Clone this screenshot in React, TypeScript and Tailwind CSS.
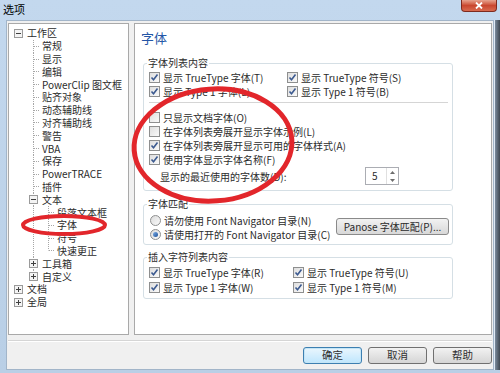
import React from 'react';

type Kind = 'none' | 'pipe' | 'tee' | 'ell' | 'minus' | 'plus' | 'minusV' | 'plusV' | 'plusL';

const treeRows: { label: string; cells: Kind[] }[] = [
  { label: '工作区', cells: ['minus'] },
  { label: '常规', cells: ['none', 'tee'] },
  { label: '显示', cells: ['none', 'tee'] },
  { label: '编辑', cells: ['none', 'tee'] },
  { label: 'PowerClip 图文框', cells: ['none', 'tee'] },
  { label: '贴齐对象', cells: ['none', 'tee'] },
  { label: '动态辅助线', cells: ['none', 'tee'] },
  { label: '对齐辅助线', cells: ['none', 'tee'] },
  { label: '警告', cells: ['none', 'tee'] },
  { label: 'VBA', cells: ['none', 'tee'] },
  { label: '保存', cells: ['none', 'tee'] },
  { label: 'PowerTRACE', cells: ['none', 'tee'] },
  { label: '插件', cells: ['none', 'tee'] },
  { label: '文本', cells: ['none', 'minusV'] },
  { label: '段落文本框', cells: ['none', 'pipe', 'tee'] },
  { label: '字体', cells: ['none', 'pipe', 'tee'] },
  { label: '符号', cells: ['none', 'pipe', 'tee'] },
  { label: '快速更正', cells: ['none', 'pipe', 'ell'] },
  { label: '工具箱', cells: ['none', 'plusV'] },
  { label: '自定义', cells: ['none', 'plusL'] },
  { label: '文档', cells: ['plus'] },
  { label: '全局', cells: ['plus'] },
];

const TreeCell = ({ kind }: { kind: Kind }) => {
  const full = kind === 'pipe' || kind === 'tee' || kind === 'minusV' || kind === 'plusV';
  const half = kind === 'ell' || kind === 'plusL';
  const horiz = kind === 'tee' || kind === 'ell';
  const box = kind.startsWith('minus') || kind.startsWith('plus');
  const plus = kind.startsWith('plus');
  return (
    <svg width="15" height="13" viewBox="0 0 15 13" className="shrink-0 overflow-visible">
      {full && <line x1="7.5" y1="0" x2="7.5" y2="13" stroke="#a6a6a6" strokeDasharray="1 1" />}
      {half && <line x1="7.5" y1="0" x2="7.5" y2="6.5" stroke="#a6a6a6" strokeDasharray="1 1" />}
      {horiz && <line x1="8" y1="6.5" x2="14" y2="6.5" stroke="#a6a6a6" strokeDasharray="1 1" />}
      {box && (
        <>
          <rect x="3.5" y="2.5" width="8" height="8" fill="#f4f4f4" stroke="#9a9a9a" />
          <line x1="5" y1="6.5" x2="10" y2="6.5" stroke="#404040" />
          {plus && <line x1="7.5" y1="4" x2="7.5" y2="9" stroke="#404040" />}
        </>
      )}
    </svg>
  );
};

const Check = ({ checked }: { checked?: boolean }) => (
  <span className="w-[11px] h-[11px] shrink-0 border border-[#8e8f8f] bg-gradient-to-br from-[#dedede] to-[#fafafa] flex items-center justify-center">
    {checked && (
      <svg width="9" height="9" viewBox="0 0 9 9">
        <path d="M1.5 4.5 L3.5 6.8 L7.5 1.5" fill="none" stroke="#3c5a90" strokeWidth="1.6" />
      </svg>
    )}
  </span>
);

const Radio = ({ checked }: { checked?: boolean }) => (
  <span className="w-[11px] h-[11px] shrink-0 rounded-full border border-[#8e8f8f] bg-gradient-to-br from-[#dcdcdc] to-[#fafafa] flex items-center justify-center">
    {checked && <span className="w-[5px] h-[5px] rounded-full bg-gradient-to-br from-[#7fb0e8] to-[#1d4f96]" />}
  </span>
);

const CheckRow = ({ label, checked }: { label: string; checked?: boolean }) => (
  <div className="flex items-center h-[14px] gap-[3px] whitespace-nowrap">
    <Check checked={checked} />
    <span>{label}</span>
  </div>
);

const Button = ({ label, primary }: { label: string; primary?: boolean }) => (
  <div
    className={
      primary
        ? 'w-[59px] h-[17px] rounded-[3px] border border-[#3c7fb1] bg-gradient-to-b from-[#eaf6fd] to-[#bee6fd] shadow-[inset_0_0_0_1px_#c4e5f6] flex items-center justify-center'
        : 'w-[59px] h-[17px] rounded-[3px] border border-[#707070] bg-gradient-to-b from-[#f2f2f2] to-[#d5d5d5] flex items-center justify-center'
    }
  >
    <span className="text-[10.5px] leading-none text-[#303030]">{label}</span>
  </div>
);

export default function App() {
  return (
    <div className="relative w-[500px] h-[373px] overflow-hidden flex flex-col bg-gradient-to-b from-[#c3d8ee] to-[#b9cfe6] font-['Noto_Sans_CJK_SC',sans-serif] text-[10px] text-[#2b2b2b]">
      {/* title bar */}
      <div className="h-[20px] flex items-start justify-between">
        <span className="pl-[3px] pt-[2px] text-[11px] leading-[14px] text-black">选项</span>
        <div className="mr-[3px] w-[36px] h-[12px] rounded-b-[4px] border border-t-0 border-[#7e2a1e] bg-gradient-to-b from-[#e6a38f] via-[#c9472f] to-[#d86a4f] flex items-center justify-center">
          <svg width="8" height="7" viewBox="0 0 8 7">
            <path d="M1 0.5 L7 6.5 M7 0.5 L1 6.5" stroke="#fff" strokeWidth="1.8" />
          </svg>
        </div>
      </div>

      <div className="flex-1 flex pb-[3px]">
        <div className="w-[6px]" />
        {/* client */}
        <div className="w-[488px] border border-[#a2b5c9] bg-[#f0f0f0] flex flex-col pt-[2px] pl-[1px] pr-[1px]">
          <div className="flex gap-[5px]">
            {/* tree */}
            <div className="w-[121px] h-[312px] border border-[#a9a9a9] bg-white pt-[3px] pl-[2px] text-[10px]">
              {treeRows.map((r, i) => (
                <div key={i} className="flex items-center h-[12.8px] whitespace-nowrap">
                  {r.cells.map((c, j) => (
                    <TreeCell key={j} kind={c} />
                  ))}
                  <span className="ml-[1px] leading-none">{r.label}</span>
                </div>
              ))}
            </div>

            {/* right panel */}
            <div className="w-[358px] h-[312px] border border-[#a9a9a9] bg-white pt-[4px]">
              <div className="pl-[6px] h-[20px] text-[13px] leading-[20px] text-[#2456a6]">字体</div>

              <fieldset className="ml-[8px] mt-[8px] w-[310px] border border-[#d5dfe5] rounded-[3px] px-[5px] pb-[5px]">
                <legend className="ml-[-2px] px-[1px] leading-[14px]">字体列表内容</legend>
                <div className="grid grid-cols-[138px_1fr]">
                  <CheckRow label="显示 TrueType 字体(T)" checked />
                  <CheckRow label="显示 TrueType 符号(S)" checked />
                  <CheckRow label="显示 Type 1 字体(L)" checked />
                  <CheckRow label="显示 Type 1 符号(B)" checked />
                </div>
                <div className="mt-[4px] mr-[-1px] border-t border-[#d5d5d5]" />
                <div className="mt-[7px]">
                  <CheckRow label="只显示文档字体(O)" />
                  <CheckRow label="在字体列表旁展开显示字体示例(L)" />
                  <CheckRow label="在字体列表旁展开显示可用的字体样式(A)" checked />
                  <CheckRow label="使用字体显示字体名称(F)" checked />
                </div>
                <div className="flex items-center h-[18px] mt-[1px]">
                  <span className="pl-[11px] w-[216px] whitespace-nowrap">显示的最近使用的字体数(D):</span>
                  <div className="w-[34px] h-[18px] border border-[#abadb3] bg-white flex">
                    <span className="flex-1 pl-[6px] leading-[16px]">5</span>
                    <div className="w-[12px] flex flex-col border-l border-[#e0e0e0]">
                      <div className="flex-1 flex items-center justify-center">
                        <svg width="5" height="3" viewBox="0 0 5 3"><path d="M0 3 L2.5 0 L5 3Z" fill="#6d6d6d" /></svg>
                      </div>
                      <div className="flex-1 flex items-center justify-center">
                        <svg width="5" height="3" viewBox="0 0 5 3"><path d="M0 0 L2.5 3 L5 0Z" fill="#6d6d6d" /></svg>
                      </div>
                    </div>
                  </div>
                </div>
              </fieldset>

              <fieldset className="ml-[8px] mt-[6px] w-[310px] border border-[#d5dfe5] rounded-[3px] pl-[6px] pr-[3px] pb-[3px]">
                <legend className="ml-[-3px] px-[1px] leading-[14px]">字体匹配</legend>
                <div className="flex items-center justify-between">
                  <div className="pt-[2px]">
                    <div className="flex items-center h-[14px] gap-[3px] whitespace-nowrap">
                      <Radio />
                      <span>请勿使用 Font Navigator 目录(N)</span>
                    </div>
                    <div className="flex items-center h-[14px] gap-[3px] whitespace-nowrap">
                      <Radio checked />
                      <span>请使用打开的 Font Navigator 目录(C)</span>
                    </div>
                  </div>
                  <div className="w-[113px] h-[17px] rounded-[3px] border border-[#8a8a8a] bg-gradient-to-b from-[#f2f2f2] to-[#d8d8d8] flex items-center justify-center whitespace-nowrap">
                    Panose 字体匹配(P)...
                  </div>
                </div>
              </fieldset>

              <fieldset className="ml-[8px] mt-[5px] w-[310px] border border-[#d5dfe5] rounded-[3px] px-[5px] pb-[4px]">
                <legend className="ml-[-2px] px-[1px] leading-[14px]">插入字符列表内容</legend>
                <div className="grid grid-cols-[144px_1fr] gap-y-[1px] pt-[1px]">
                  <CheckRow label="显示 TrueType 字体(R)" checked />
                  <CheckRow label="显示 TrueType 符号(U)" checked />
                  <CheckRow label="显示 Type 1 字体(W)" checked />
                  <CheckRow label="显示 Type 1 符号(M)" checked />
                </div>
              </fieldset>
            </div>
          </div>

          <div className="mt-[5px] border-t border-[#d5d5d5] border-b border-b-white" />

          <div className="mt-[5px] flex justify-end gap-[6px]">
            <Button label="确定" primary />
            <Button label="取消" />
            <Button label="帮助" />
          </div>
        </div>
        <div className="w-[6px] flex">
          <div className="w-[1px] bg-[#dfe9f5]" />
          <div className="flex-1 bg-gradient-to-r from-[#7c8c9e] to-[#3f4852]" />
        </div>
      </div>

      {/* hand-drawn red annotation marks */}
      <svg className="absolute inset-0 pointer-events-none" width="500" height="373" viewBox="0 0 500 373">
        <ellipse cx="213" cy="145" rx="79" ry="56" transform="rotate(-4 213 145)" fill="none" stroke="#e2262b" strokeWidth="5" />
        <ellipse cx="64" cy="225" rx="41" ry="9" fill="none" stroke="#e2262b" strokeWidth="4" />
      </svg>
    </div>
  );
}
